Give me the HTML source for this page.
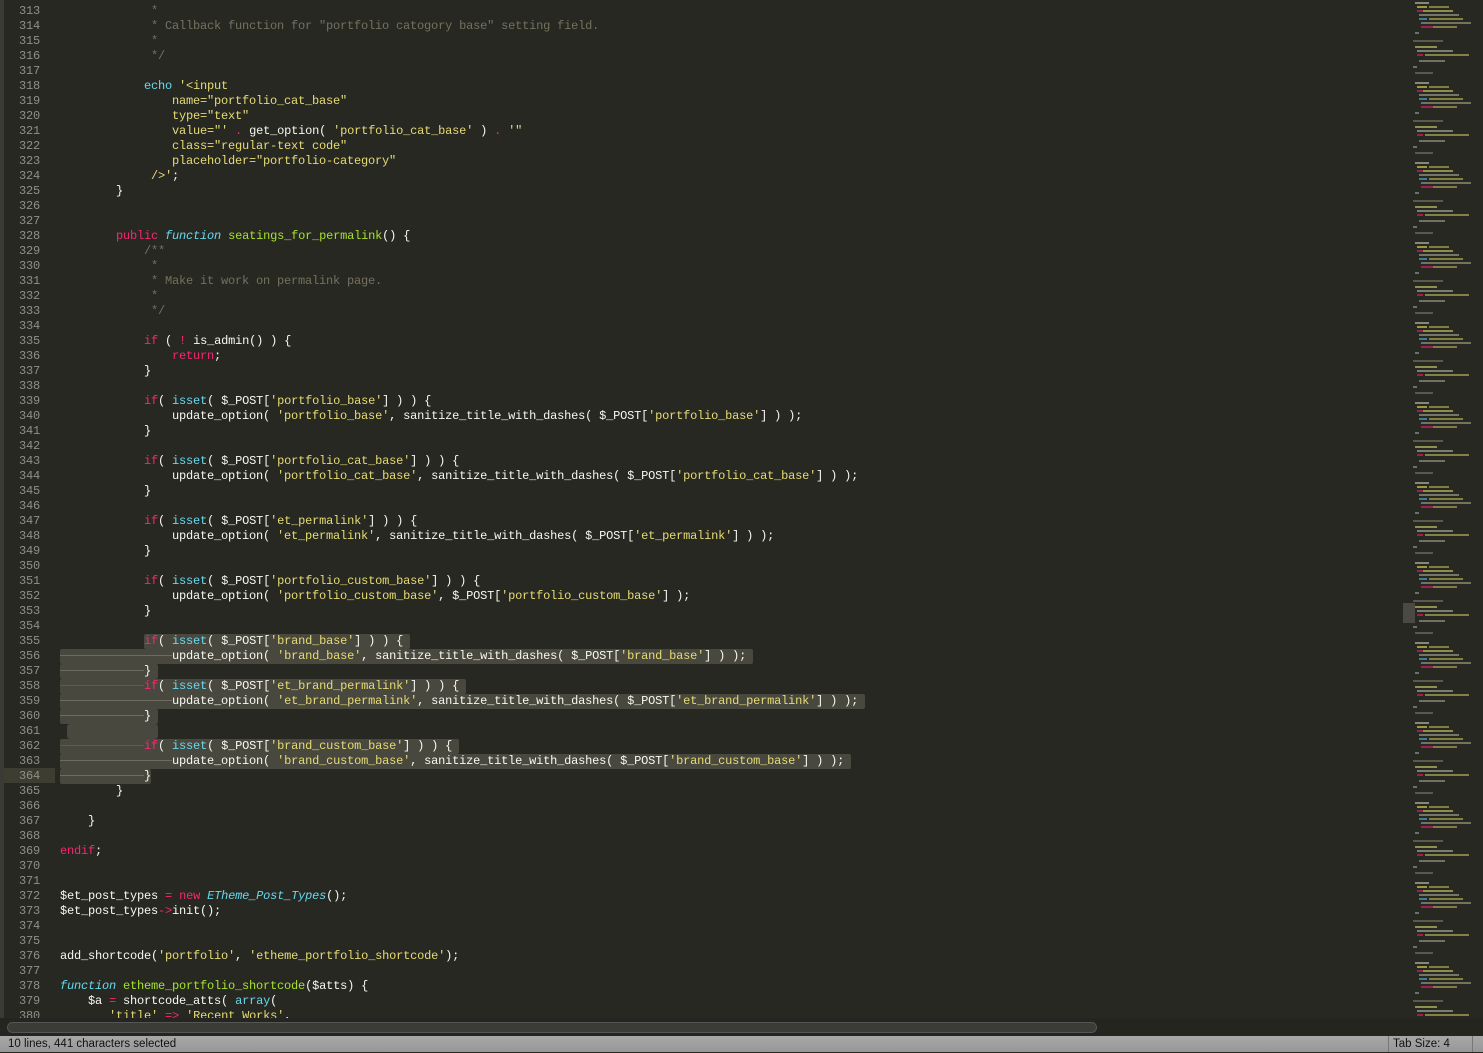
<!DOCTYPE html>
<html><head><meta charset="utf-8">
<style>
html,body{margin:0;padding:0;width:1483px;height:1052px;overflow:hidden;background:#272822;}
#gut{position:absolute;left:4px;top:0;width:52px;height:1020px;}
#leftstrip{position:absolute;left:0;top:0;width:4px;height:1036px;background:#3a3a36;}
.ln{position:absolute;left:0;width:40px;text-align:right;height:15px;line-height:15px;color:#8f908a;font:12px "Liberation Mono",monospace;letter-spacing:-0.2px}
pre{position:absolute;left:60px;top:4px;margin:0;font:12px/15px "Liberation Mono",monospace;letter-spacing:-0.2px;color:#f8f8f2;white-space:pre;}
.c{color:#75715e}.k{color:#f92672}.f{color:#66d9ef}.i{color:#66d9ef;font-style:italic}.s{color:#e6db74}.g{color:#a6e22e}
.sel{background:#49483e;display:inline-block;height:15px;vertical-align:top;border-radius:2px}
.ws{text-decoration:line-through;text-decoration-color:#6b6b60}
.wr{text-decoration:line-through;text-decoration-color:#c0285a}
#scroll{position:absolute;left:0;top:1018px;width:1483px;height:18px;background:#252520;}
#thumb{position:absolute;left:7px;top:1022px;width:1088px;height:9px;background:#3b3b37;border:1px solid #555;border-radius:6px;}
#status{position:absolute;left:0;top:1036px;width:1483px;height:16px;background:linear-gradient(#a8a8a8,#979797);font:11.5px/17px "Liberation Sans",sans-serif;color:#111;}
#mini{position:absolute;left:1403px;top:0;width:80px;height:1018px;}
</style></head><body>
<div id="leftstrip"></div>
<div id="gut">
<div style="position:absolute;left:0;top:768px;width:51px;height:15px;background:#3e3d32"></div>
</div>
<div id="nums" style="position:absolute;left:0;top:4px;">
<div class="ln" style="top:0">313</div><div class="ln" style="top:15px">314</div><div class="ln" style="top:30px">315</div><div class="ln" style="top:45px">316</div><div class="ln" style="top:60px">317</div><div class="ln" style="top:75px">318</div><div class="ln" style="top:90px">319</div><div class="ln" style="top:105px">320</div><div class="ln" style="top:120px">321</div><div class="ln" style="top:135px">322</div><div class="ln" style="top:150px">323</div><div class="ln" style="top:165px">324</div><div class="ln" style="top:180px">325</div><div class="ln" style="top:195px">326</div><div class="ln" style="top:210px">327</div><div class="ln" style="top:225px">328</div><div class="ln" style="top:240px">329</div><div class="ln" style="top:255px">330</div><div class="ln" style="top:270px">331</div><div class="ln" style="top:285px">332</div><div class="ln" style="top:300px">333</div><div class="ln" style="top:315px">334</div><div class="ln" style="top:330px">335</div><div class="ln" style="top:345px">336</div><div class="ln" style="top:360px">337</div><div class="ln" style="top:375px">338</div><div class="ln" style="top:390px">339</div><div class="ln" style="top:405px">340</div><div class="ln" style="top:420px">341</div><div class="ln" style="top:435px">342</div><div class="ln" style="top:450px">343</div><div class="ln" style="top:465px">344</div><div class="ln" style="top:480px">345</div><div class="ln" style="top:495px">346</div><div class="ln" style="top:510px">347</div><div class="ln" style="top:525px">348</div><div class="ln" style="top:540px">349</div><div class="ln" style="top:555px">350</div><div class="ln" style="top:570px">351</div><div class="ln" style="top:585px">352</div><div class="ln" style="top:600px">353</div><div class="ln" style="top:615px">354</div><div class="ln" style="top:630px">355</div><div class="ln" style="top:645px">356</div><div class="ln" style="top:660px">357</div><div class="ln" style="top:675px">358</div><div class="ln" style="top:690px">359</div><div class="ln" style="top:705px">360</div><div class="ln" style="top:720px">361</div><div class="ln" style="top:735px">362</div><div class="ln" style="top:750px">363</div><div class="ln" style="top:765px">364</div><div class="ln" style="top:780px">365</div><div class="ln" style="top:795px">366</div><div class="ln" style="top:810px">367</div><div class="ln" style="top:825px">368</div><div class="ln" style="top:840px">369</div><div class="ln" style="top:855px">370</div><div class="ln" style="top:870px">371</div><div class="ln" style="top:885px">372</div><div class="ln" style="top:900px">373</div><div class="ln" style="top:915px">374</div><div class="ln" style="top:930px">375</div><div class="ln" style="top:945px">376</div><div class="ln" style="top:960px">377</div><div class="ln" style="top:975px">378</div><div class="ln" style="top:990px">379</div><div class="ln" style="top:1005px">380</div>
</div>
<div style="position:absolute;left:67px;top:724px;width:91px;height:15px;background:#49483e;border-radius:3px"></div>
<pre><span class="c">             *
             * Callback function for "portfolio catogory base" setting field.
             *
             */</span>

            <span class="f">echo</span> <span class="s">'&lt;input</span>
<span class="s">                name="portfolio_cat_base"</span>
<span class="s">                type="text"</span>
<span class="s">                value="'</span> <span class="k">.</span> get_option( <span class="s">'portfolio_cat_base'</span> ) <span class="k">.</span> <span class="s">'"</span>
<span class="s">                class="regular-text code"</span>
<span class="s">                placeholder="portfolio-category"</span>
<span class="s">             /&gt;'</span>;
        }


        <span class="k">public</span> <span class="i">function</span> <span class="g">seatings_for_permalink</span>() {
            <span class="c">/**</span>
<span class="c">             *</span>
<span class="c">             * Make it work on permalink page.</span>
<span class="c">             *</span>
<span class="c">             */</span>

            <span class="k">if</span> ( <span class="k">!</span> is_admin() ) {
                <span class="k">return</span>;
            }

            <span class="k">if</span>( <span class="f">isset</span>( $_POST[<span class="s">'portfolio_base'</span>] ) ) {
                update_option( <span class="s">'portfolio_base'</span>, sanitize_title_with_dashes( $_POST[<span class="s">'portfolio_base'</span>] ) );
            }

            <span class="k">if</span>( <span class="f">isset</span>( $_POST[<span class="s">'portfolio_cat_base'</span>] ) ) {
                update_option( <span class="s">'portfolio_cat_base'</span>, sanitize_title_with_dashes( $_POST[<span class="s">'portfolio_cat_base'</span>] ) );
            }

            <span class="k">if</span>( <span class="f">isset</span>( $_POST[<span class="s">'et_permalink'</span>] ) ) {
                update_option( <span class="s">'et_permalink'</span>, sanitize_title_with_dashes( $_POST[<span class="s">'et_permalink'</span>] ) );
            }

            <span class="k">if</span>( <span class="f">isset</span>( $_POST[<span class="s">'portfolio_custom_base'</span>] ) ) {
                update_option( <span class="s">'portfolio_custom_base'</span>, $_POST[<span class="s">'portfolio_custom_base'</span>] );
            }

            <span class="sel"><span class="k">if</span>( <span class="f">isset</span>( $_POST[<span class="s">'brand_base'</span>] ) ) { </span>
<span class="sel"><span class="ws">                </span>update_option( <span class="s">'brand_base'</span>, sanitize_title_with_dashes( $_POST[<span class="s">'brand_base'</span>] ) ); </span>
<span class="sel"><span class="ws">            </span>} </span>
<span class="sel"><span class="wr">            </span><span class="k">if</span>( <span class="f">isset</span>( $_POST[<span class="s">'et_brand_permalink'</span>] ) ) { </span>
<span class="sel"><span class="ws">                </span>update_option( <span class="s">'et_brand_permalink'</span>, sanitize_title_with_dashes( $_POST[<span class="s">'et_brand_permalink'</span>] ) ); </span>
<span class="sel"><span class="ws">            </span>} </span>

<span class="sel"><span class="wr">            </span><span class="k">if</span>( <span class="f">isset</span>( $_POST[<span class="s">'brand_custom_base'</span>] ) ) { </span>
<span class="sel"><span class="ws">                </span>update_option( <span class="s">'brand_custom_base'</span>, sanitize_title_with_dashes( $_POST[<span class="s">'brand_custom_base'</span>] ) ); </span>
<span class="sel"><span class="ws">            </span>}</span>
        }

    }

<span class="k">endif</span>;


$et_post_types <span class="k">=</span> <span class="k">new</span> <span class="i">ETheme_Post_Types</span>();
$et_post_types<span class="k">-&gt;</span>init();


add_shortcode(<span class="s">'portfolio'</span>, <span class="s">'etheme_portfolio_shortcode'</span>);

<span class="i">function</span> <span class="g">etheme_portfolio_shortcode</span>($atts) {
    $a <span class="k">=</span> shortcode_atts( <span class="f">array</span>(
       <span class="s">'title'</span> <span class="k">=&gt;</span> <span class="s">'Recent Works'</span>,</pre>
<svg id="mini" width="80" height="1018" viewBox="0 0 80 1018">
<defs>
<g id="blk" opacity="0.75">
<rect x="12" y="2" width="14" height="2" fill="#a8a89a"/><rect x="14" y="6" width="10" height="2" fill="#c0c040"/><rect x="26" y="6" width="20" height="2" fill="#9a9a50"/>
<rect x="14" y="10" width="6" height="2" fill="#c02060"/><rect x="20" y="10" width="30" height="2" fill="#b0b060"/><rect x="16" y="14" width="40" height="2" fill="#8f8f7f"/>
<rect x="16" y="18" width="8" height="2" fill="#40a0b8"/><rect x="26" y="18" width="34" height="2" fill="#a0a040"/><rect x="18" y="22" width="50" height="2" fill="#8a8a7a"/>
<rect x="18" y="26" width="12" height="2" fill="#c02060"/><rect x="30" y="26" width="24" height="2" fill="#9a9a50"/><rect x="12" y="32" width="4" height="2" fill="#888"/>
<rect x="10" y="40" width="30" height="2" fill="#6a6a5a"/><rect x="12" y="46" width="22" height="2" fill="#b0b060"/><rect x="14" y="50" width="36" height="2" fill="#9a9a8a"/>
<rect x="14" y="54" width="6" height="2" fill="#c02060"/><rect x="22" y="54" width="44" height="2" fill="#a0a050"/><rect x="16" y="60" width="26" height="2" fill="#8a8a7a"/>
<rect x="10" y="66" width="4" height="2" fill="#888"/><rect x="12" y="72" width="18" height="2" fill="#6a6a5a"/>
</g>
</defs>
<use href="#blk" y="0"/><use href="#blk" y="80"/><use href="#blk" y="160"/><use href="#blk" y="240"/><use href="#blk" y="320"/><use href="#blk" y="400"/><use href="#blk" y="480"/><use href="#blk" y="560"/><use href="#blk" y="640"/><use href="#blk" y="720"/><use href="#blk" y="800"/><use href="#blk" y="880"/><use href="#blk" y="960"/>
<rect x="0" y="603" width="12" height="20" fill="#4a4a42"/>
</svg>
<div id="scroll"></div>
<div id="thumb"></div>
<div id="status">
<span style="position:absolute;left:8px;top:0">10 lines, 441 characters selected</span>
<span style="position:absolute;left:1388px;top:0;width:1px;height:16px;background:#777"></span>
<span style="position:absolute;left:1393px;top:0">Tab Size: 4</span>
<span style="position:absolute;left:1472px;top:0;width:1px;height:16px;background:#777"></span>
</div>
</body></html>
